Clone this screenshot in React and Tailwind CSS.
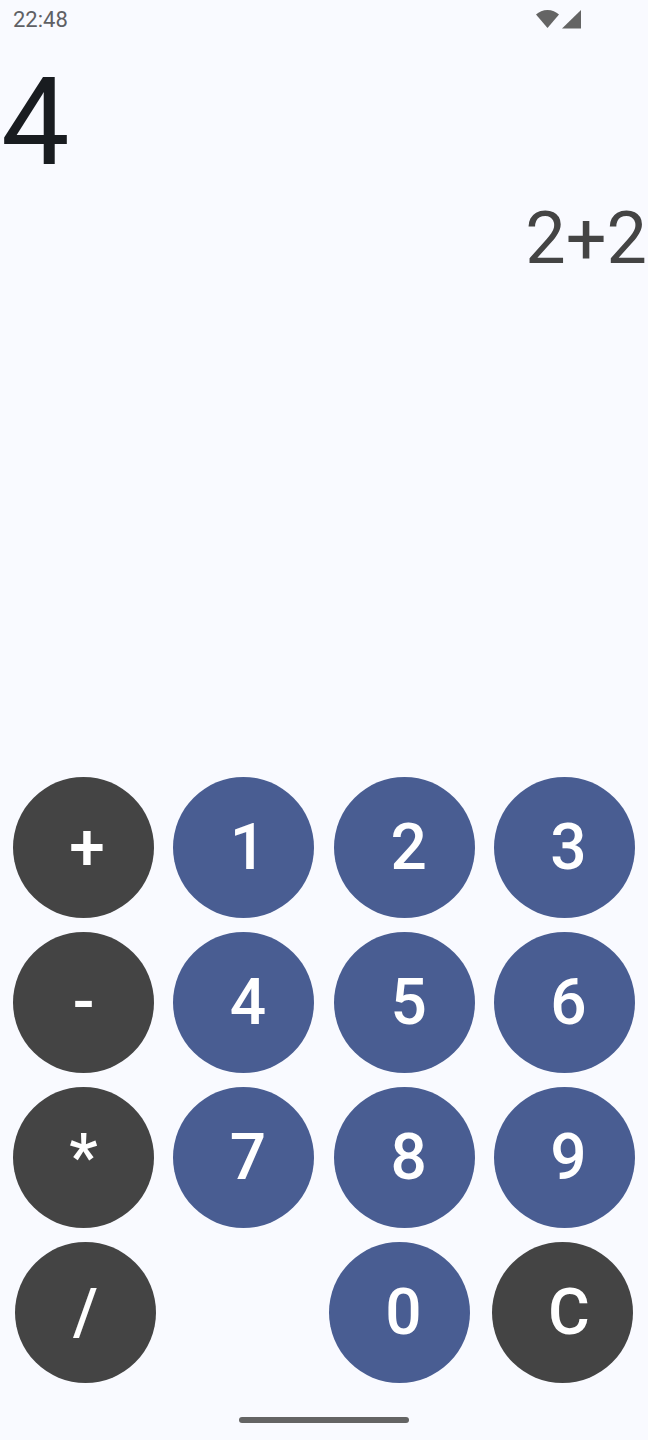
import React from 'react';

const rows = [
  [['+', 'op', 'pl-[7px]'], ['1', 'num', 'pl-[8px]'], ['2', 'num', 'pl-[9px]'], ['3', 'num', 'pl-[8px]']],
  [['-', 'op', 'pl-0'], ['4', 'num', 'pl-[8px]'], ['5', 'num', 'pl-[9px]'], ['6', 'num', 'pl-[8px]']],
  [['*', 'op', 'pl-0'], ['7', 'num', 'pl-[8px]'], ['8', 'num', 'pl-[9px]'], ['9', 'num', 'pl-[8px]']],
];

const KeyButton = ({ label, kind, nudge }) => (
  <button
    className={`w-[141px] h-[141px] rounded-full flex items-center justify-center text-white font-medium text-[64px] leading-none ${nudge} ${
      kind === 'op' ? 'bg-[#444444]' : 'bg-[#495d92]'
    }`}
  >
    {label}
  </button>
);

const StatusBar = () => (
  <div className="h-[40px] flex items-center justify-between pl-[13px] pr-[67px] text-[#5f6064]">
    <span className="text-[22px] leading-none">22:48</span>
    <div className="flex items-end gap-[2px] -mt-[3px]">
      <svg width="23" height="20" viewBox="0 0 23 20">
        <path d="M0 5.5C3 2.8 7 1 11.5 1S20 2.8 23 5.5L11.5 19Z" fill="#646464" />
      </svg>
      <svg width="20" height="20" viewBox="0 0 20 20">
        <path d="M20 1V19.5H1Z" fill="#646464" />
      </svg>
    </div>
  </div>
);

export default function App() {
  return (
    <div className="w-[648px] h-[1440px] bg-[#f9faff] flex flex-col font-['Roboto',sans-serif]">
      <StatusBar />

      <div className="h-[150px] pt-[8px] pl-[1px] text-[122px] leading-[150px] text-[#191c20]">4</div>
      <div className="h-[90px] mt-[4px] -mb-[4px] text-right pr-[1px] text-[72px] leading-[90px] text-[#444444]">2+2</div>

      {/* keypad */}
      <div className="mt-[497px] flex flex-col gap-[14px]">
        {rows.map((row, i) => (
          <div key={i} className="flex justify-between px-[13px]">
            {row.map(([label, kind, nudge]) => (
              <KeyButton key={label} label={label} kind={kind} nudge={nudge} />
            ))}
          </div>
        ))}
        <div className="flex pl-[15px] pr-[15px]">
          <KeyButton label="/" kind="op" nudge="pl-0" />
          <div className="ml-auto flex gap-[22px]">
            <KeyButton label="0" kind="num" nudge="pl-[8px]" />
            <KeyButton label="C" kind="op" nudge="pl-[13px]" />
          </div>
        </div>
      </div>

      <div className="mt-[34px] mx-auto w-[170px] h-[6px] rounded-full bg-[#646464]" />
    </div>
  );
}
